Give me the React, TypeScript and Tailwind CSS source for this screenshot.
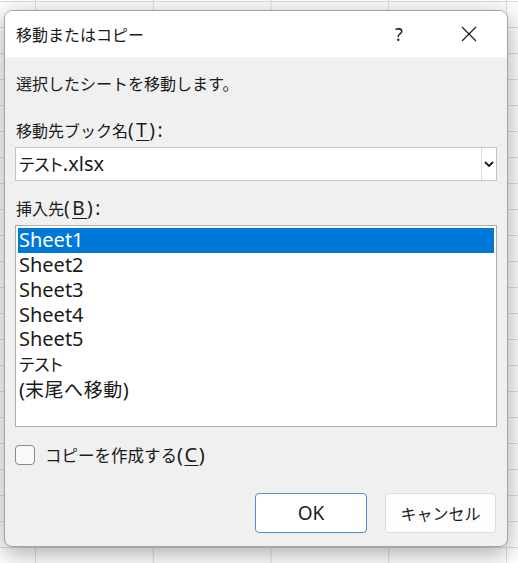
import React, { useState } from 'react';

const sheets = ['Sheet1', 'Sheet2', 'Sheet3', 'Sheet4', 'Sheet5'];

const jp = "font-['Noto_Sans_CJK_JP',sans-serif]";

const Mnemonic = ({ ch }: { ch: string }) => (
  <span className="underline underline-offset-[3px] decoration-1">{ch}</span>
);

const CloseIcon = () => (
  <svg width="16" height="16" viewBox="0 0 16 16" className="text-[#1a1a1a]">
    <path d="M1 1 L15 15 M15 1 L1 15" stroke="currentColor" strokeWidth="1.2" fill="none" />
  </svg>
);

const Chevron = () => (
  <svg width="10" height="6" viewBox="0 0 10 6">
    <path d="M1 1 L5 5 L9 1" stroke="#1a1a1a" strokeWidth="1.8" fill="none" />
  </svg>
);

export default function App() {
  const [selected, setSelected] = useState(0);
  const [copy, setCopy] = useState(false);

  return (
    <div className="w-[518px] h-[563px] overflow-hidden bg-white bg-[linear-gradient(to_right,#dedede_1px,transparent_1px),linear-gradient(to_bottom,#dedede_1px,transparent_1px)] [background-size:117.75px_26px] [background-position:35px_1px] pt-[10px] pl-[4px] font-['Noto_Sans','Noto_Sans_CJK_JP',sans-serif] text-[#1a1a1a]">
      <div className="w-[504px] h-[537px] rounded-[8px] border border-[#a3a3a3] bg-[#f0f0f0] overflow-hidden flex flex-col shadow-[0_6px_24px_rgba(0,0,0,0.35)]">
        {/* title bar */}
        <div className="h-[46px] bg-white flex items-center pl-[11px] shrink-0">
          <span className={`text-[16px] leading-[24px] ${jp}`}>移動またはコピー</span>
          <span className="ml-auto w-[20px] text-center text-[18px] leading-[24px]">?</span>
          <span className="ml-[52px] mr-[30px] flex items-center">
            <CloseIcon />
          </span>
        </div>

        <div className="flex flex-col px-[10px]">
          <div className={`mt-[14px] pl-[1px] text-[16px] leading-[24px] ${jp}`}>
            選択したシートを移動します。
          </div>

          <div className="mt-[23px] pl-[1px] leading-[24px] flex items-baseline">
            <span className={`text-[16px] ${jp}`}>移動先ブック名</span>
            <span className="text-[19px] tracking-[2.5px]">(<Mnemonic ch="T" />):</span>
          </div>

          <div className="mt-[5px] h-[34px] w-[482px] bg-white border border-[#c4c4c4] flex items-center">
            <span className="pl-[3px] flex items-baseline text-[20px] leading-[32px]">
              <span className={`text-[17px] [font-feature-settings:'palt'] ${jp}`}>テスト</span>
              <span>.xlsx</span>
            </span>
            <span className="ml-auto h-full w-[15px] border-l border-[#dcdcdc] flex items-center justify-center">
              <Chevron />
            </span>
          </div>

          <div className="mt-[15px] pl-[1px] leading-[24px] flex items-baseline">
            <span className={`text-[16px] ${jp}`}>挿入先</span>
            <span className="text-[19px] tracking-[2.5px]">(<Mnemonic ch="B" />):</span>
          </div>

          <div className="mt-[5px] h-[202px] w-[482px] bg-white border border-[#adadad] p-[2px] flex flex-col">
            {sheets.map((name, i) => (
              <div
                key={name}
                onClick={() => setSelected(i)}
                className={`h-[24.75px] shrink-0 flex items-center pl-[1px] ${
                  selected === i ? 'bg-[#0078d7] text-white' : ''
                }`}
              >
                <span className="text-[20px] leading-[24px]">{name}</span>
              </div>
            ))}
            <div
              onClick={() => setSelected(5)}
              className={`h-[24.75px] shrink-0 flex items-center pl-[1px] ${selected === 5 ? 'bg-[#0078d7] text-white' : ''}`}
            >
              <span className={`text-[17px] leading-[24px] [font-feature-settings:'palt'] ${jp}`}>テスト</span>
            </div>
            <div
              onClick={() => setSelected(6)}
              className={`h-[24.75px] shrink-0 flex items-baseline pl-[1px] leading-[24px] ${selected === 6 ? 'bg-[#0078d7] text-white' : ''}`}
            >
              <span className="text-[20px]">(</span>
              <span className={`text-[19px] tracking-[0.5px] [font-feature-settings:'palt'] ${jp}`}>末尾へ移動</span>
              <span className="text-[20px]">)</span>
            </div>
          </div>

          <label className="mt-[18px] h-[20px] flex items-center cursor-default" onClick={() => setCopy(!copy)}>
            <span
              className={`w-[20px] h-[20px] rounded-[4px] border ${
                copy ? 'bg-[#0067c0] border-[#0067c0]' : 'bg-[#f9f9f9] border-[#8a8a8a]'
              }`}
            />
            <span className="ml-[10px] leading-[24px] flex items-baseline">
              <span className={`text-[16.5px] ${jp}`}>コピーを作成する</span>
              <span className="text-[20px] tracking-[1.5px]">(<Mnemonic ch="C" />)</span>
            </span>
          </label>

          <div className="mt-[28px] flex justify-end gap-[18px] pr-[1px]">
            <button className="w-[112px] h-[40px] rounded-[4px] bg-white border border-[#4a90d9] text-[19px] leading-[24px]">
              OK
            </button>
            <button className={`w-[111px] h-[40px] rounded-[4px] bg-[#fdfdfd] border border-[#dcdcdc] text-[16px] leading-[24px] ${jp}`}>
              キャンセル
            </button>
          </div>
        </div>
      </div>
    </div>
  );
}
